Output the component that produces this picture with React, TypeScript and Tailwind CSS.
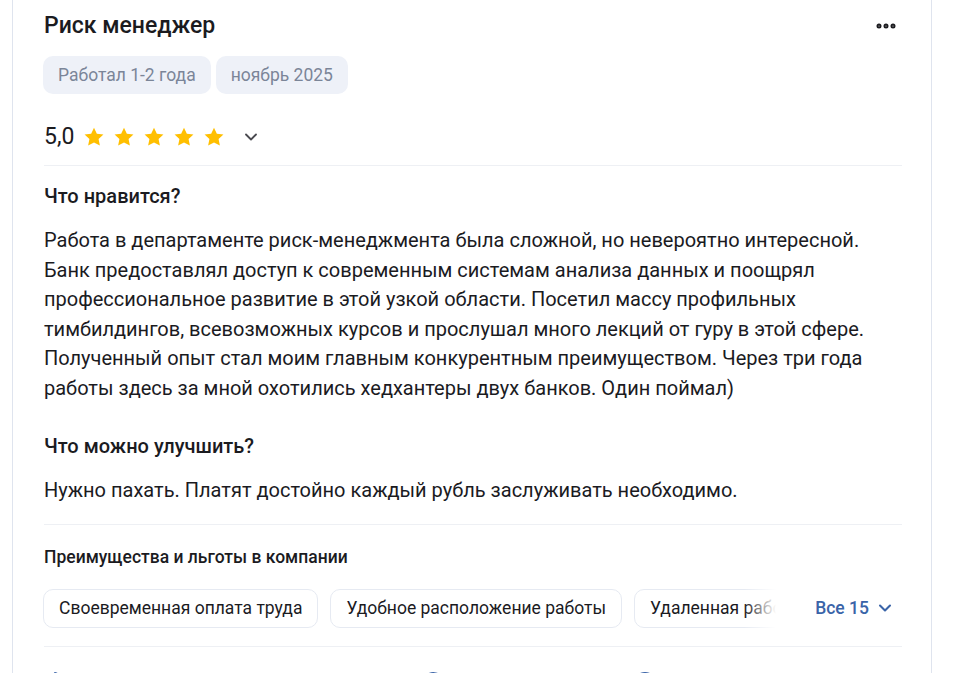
import React from 'react';
import { ChevronDown, MoreHorizontal, ThumbsUp, MessageCircle, CircleUser } from 'lucide-react';

const FONT = { fontFamily: 'Roboto, "Noto Sans", Arial, sans-serif' };

const paragraph =
  'Работа в департаменте риск-менеджмента была сложной, но невероятно интересной. Банк предоставлял доступ к современным системам анализа данных и поощрял профессиональное развитие в этой узкой области. Посетил массу профильных тимбилдингов, всевозможных курсов и прослушал много лекций от гуру в этой сфере. Полученный опыт стал моим главным конкурентным преимуществом. Через три года работы здесь за мной охотились хедхантеры двух банков. Один поймал)';

const perks = ['Своевременная оплата труда', 'Удобное расположение работы', 'Удаленная работа', 'ДМС'];

function Star() {
  return (
    <svg width="22" height="22" viewBox="0 0 24 24" className="shrink-0">
      <path
        d="M12 1.8l3.1 6.6 7.2.9-5.3 5 1.4 7.1L12 17.9l-6.4 3.5L7 14.3l-5.3-5 7.2-.9z"
        fill="#ffbf00"
      />
    </svg>
  );
}

export default function App() {
  return (
    <div className="min-h-screen bg-white text-[#1b1b1f]" style={FONT}>
      <div className="ml-3 w-[920px] -mt-4 rounded-2xl border border-[#dfe4ee] bg-white pl-[30px] pr-[29px] pt-[27px] pb-6">
        <div className="flex items-start justify-between">
          <h1 className="ml-px text-[23px] font-medium leading-[28px]">Риск менеджер</h1>
          <MoreHorizontal className="mr-1 mt-0.5 h-6 w-6 text-[#1b1b1f]" strokeWidth={3} />
        </div>

        <div className="mt-[16px] flex gap-[5px]">
          <span className="rounded-[10px] bg-[#eef1f8] px-[15px] py-[9px] text-[17.5px] leading-[20px] text-[#7b8598]">
            Работал 1-2 года
          </span>
          <span className="rounded-[10px] bg-[#eef1f8] px-[15px] py-[9px] text-[17.5px] leading-[20px] text-[#7b8598]">
            ноябрь 2025
          </span>
        </div>

        <div className="ml-px mt-[29px] flex items-center">
          <span className="text-[23px] leading-[28px]">5,0</span>
          <div className="ml-[9px] flex gap-[8px]">
            <Star />
            <Star />
            <Star />
            <Star />
            <Star />
          </div>
          <ChevronDown className="ml-[16px] h-5 w-5 text-[#4a4a50]" strokeWidth={2.2} />
        </div>

        <div className="ml-px mt-[14px] h-px bg-[#eef0f4]" />

        <div className="ml-px">
          <h2 className="mt-[18px] text-[20px] font-medium leading-[24px]">Что нравится?</h2>
          <p className="mt-[18px] text-[20px] leading-[29.6px]">{paragraph}</p>

          <h2 className="mt-[30px] text-[20px] font-medium leading-[24px]">Что можно улучшить?</h2>
          <p className="mt-[17px] text-[20px] leading-[30px]">
            Нужно пахать. Платят достойно каждый рубль заслуживать необходимо.
          </p>
        </div>

        <div className="ml-px mt-[19px] h-px bg-[#eef0f4]" />

        <h3 className="ml-px mt-[21px] text-[17.5px] font-medium leading-[22px]">Преимущества и льготы в компании</h3>

        <div className="mt-[21px] flex items-center">
          <div className="relative w-[733px] overflow-hidden">
            <div className="flex gap-[12px]">
              {perks.map((p) => (
                <span
                  key={p}
                  className="shrink-0 whitespace-nowrap rounded-[10px] border border-[#e6eaf2] px-[15px] py-[8px] text-[17.5px] leading-[21px]"
                >
                  {p}
                </span>
              ))}
            </div>
            <div className="pointer-events-none absolute inset-y-0 right-0 w-[32px] bg-gradient-to-r from-white/0 to-white" />
          </div>
          <button className="ml-auto mr-[7px] flex items-center gap-[6px] text-[17.5px] font-medium text-[#3a64a8]">
            Все 15
            <ChevronDown className="h-5 w-5" strokeWidth={2.5} />
          </button>
        </div>

        <div className="ml-px mt-[18px] h-px bg-[#eef0f4]" />

        <div className="mt-[24px] flex items-center text-[17px] text-[#3a64a8]">
          <div className="flex w-[378px] items-center gap-2">
            <ThumbsUp className="h-6 w-6" fill="#3a64a8" />
            <span>Полезно</span>
          </div>
          <div className="flex w-[212px] items-center gap-2">
            <MessageCircle className="h-6 w-6" fill="#3a64a8" />
            <span>Ответить</span>
          </div>
          <div className="flex items-center gap-2">
            <CircleUser className="h-6 w-6" />
            <span>Поделиться</span>
          </div>
        </div>
      </div>
    </div>
  );
}
